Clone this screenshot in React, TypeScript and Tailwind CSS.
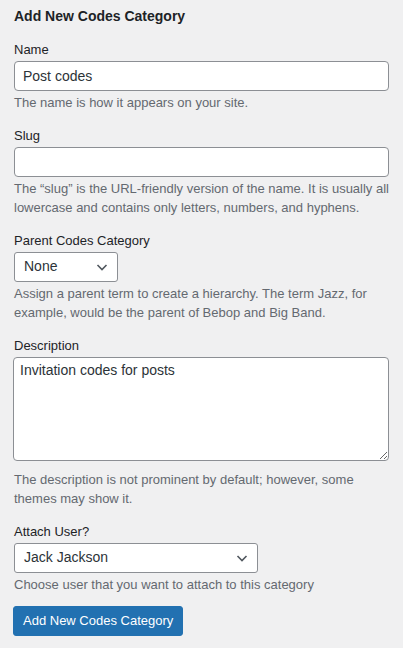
import type { ReactNode } from 'react';

const font = "font-['Liberation_Sans',Arial,sans-serif]";

function Chevron() {
  return (
    <svg
      viewBox="0 0 16 16"
      className="pointer-events-none absolute right-[8px] top-1/2 h-[16px] w-[16px] -translate-y-1/2"
      fill="none"
      stroke="#50575e"
      strokeWidth="1.6"
    >
      <polyline points="3.5,6 8,10.5 12.5,6" />
    </svg>
  );
}

function Field({
  label,
  help,
  children,
  helpGap = 'mt-[2px]',
  gap = 'mb-[14px]',
}: {
  label: string;
  help: ReactNode;
  children: ReactNode;
  helpGap?: string;
  gap?: string;
}) {
  return (
    <div className={gap}>
      <label className="mb-[2px] block leading-[18px] text-[#1d2327]">{label}</label>
      {children}
      <p className={`${helpGap} whitespace-nowrap leading-[19.5px] text-[#646970]`}>{help}</p>
    </div>
  );
}

function Select({ value, width }: { value: string; width: string }) {
  return (
    <div className={`relative ${width}`}>
      <select
        defaultValue={value}
        className="block h-[30px] w-full appearance-none rounded-[3px] border border-[#8c8f94] bg-white pl-[9px] pr-[24px] text-[14px] text-[#2c3338] outline-none"
      >
        <option>{value}</option>
      </select>
      <Chevron />
    </div>
  );
}

export default function App() {
  return (
    <div className={`min-h-screen bg-[#f0f0f1] px-[14px] pt-[6px] text-[13px] ${font}`}>
      <h2 className="mb-[15px] text-[14px] font-semibold leading-[20px] text-[#1d2327]">
        Add New Codes Category
      </h2>

      <Field label="Name" help="The name is how it appears on your site.">
        <input
          type="text"
          defaultValue="Post codes"
          className="block h-[30px] w-full rounded-[4px] border border-[#8c8f94] bg-white px-[8px] text-[14px] text-[#2c3338] outline-none"
        />
      </Field>

      <Field
        label="Slug"
        help={
          <>
            The “slug” is the URL-friendly version of the name. It is usually all
            <br />
            lowercase and contains only letters, numbers, and hyphens.
          </>
        }
      >
        <input
          type="text"
          className="block h-[30px] w-full rounded-[4px] border border-[#8c8f94] bg-white px-[8px] text-[14px] text-[#2c3338] outline-none"
        />
      </Field>

      <Field
        label="Parent Codes Category"
        help={
          <>
            Assign a parent term to create a hierarchy. The term Jazz, for
            <br />
            example, would be the parent of Bebop and Big Band.
          </>
        }
      >
        <Select value="None" width="w-[104px]" />
      </Field>

      <Field
        label="Description"
        helpGap="mt-[9px]"
        help={
          <>
            The description is not prominent by default; however, some
            <br />
            themes may show it.
          </>
        }
      >
        <textarea
          defaultValue="Invitation codes for posts"
          className="-ml-px block h-[104px] w-[376px] rounded-[4px] border border-[#8c8f94] bg-white px-[6px] py-[2px] text-[14px] leading-[20px] text-[#2c3338] outline-none"
        />
      </Field>

      <Field
        label="Attach User?"
        gap="mb-[12px]"
        help="Choose user that you want to attach to this category"
      >
        <Select value="Jack Jackson" width="w-[244px]" />
      </Field>

      <button
        type="button"
        className="-ml-px h-[30px] rounded-[3px] border border-[#2271b1] bg-[#2271b1] px-[9px] text-[13px] text-white"
      >
        Add New Codes Category
      </button>
    </div>
  );
}
